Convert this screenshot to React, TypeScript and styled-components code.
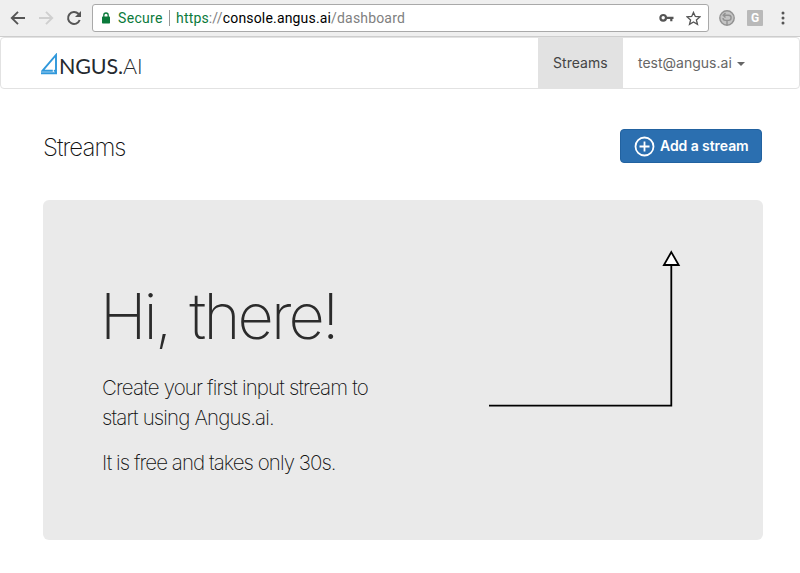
import React from "react";
import styled, { createGlobalStyle } from "styled-components";

const GlobalStyle = createGlobalStyle`
  * { box-sizing: border-box; }
  body { margin: 0; background: #fff; font-family: Inter, "Liberation Sans", sans-serif; overflow: hidden; }
  h1, h2, p { margin: 0; }
  svg { display: block; flex: none; }
`;

const Page = styled.div`
  width: 800px;
  height: 573px;
  display: flex;
  flex-direction: column;
`;

const BrowserBar = styled.header`
  height: 37px;
  flex: none;
  display: flex;
  align-items: center;
  background: #efefef;
  border-bottom: 1px solid #cdcdcd;
  padding-left: 10px;
`;

const NavIcons = styled.div`
  display: flex;
  gap: 12px;
  width: 82px;
`;

const AddressBar = styled.div`
  width: 617px;
  height: 28px;
  display: flex;
  align-items: center;
  background: #fff;
  border: 1px solid #a9a9a9;
  border-radius: 3px;
  padding: 0 7px 0 8px;
  font: 14px/26px Roboto, sans-serif;
  white-space: pre;
`;

const Secure = styled.span`
  width: 51px;
  margin-left: 7px;
  color: #0b7a3b;
  letter-spacing: 0.32px;
`;

const Divider = styled.span`
  width: 1px;
  height: 16px;
  background: #999;
  margin-right: 6px;
`;

const Url = styled.span`
  flex: 1;
  color: #808080;
  letter-spacing: 0.17px;
`;

const UrlPart = styled.span<{ $tone: string }>`
  color: ${(p) => p.$tone};
`;

const AddressActions = styled.div`
  display: flex;
  align-items: center;
  gap: 12px;
`;

const Extensions = styled.div`
  display: flex;
  align-items: center;
  margin-left: 10px;
  gap: 12px;
`;

const ExtensionBadge = styled.span`
  width: 16px;
  height: 16px;
  border-radius: 1px;
  background: #b9b9b9;
  color: #fff;
  font: bold 12px/16px Roboto, sans-serif;
  text-align: center;
`;

const Navbar = styled.nav`
  height: 52px;
  flex: none;
  display: flex;
  border: 1px solid #e2e2e2;
  border-radius: 4px;
  padding-left: 40px;
`;

const Brand = styled.div`
  display: flex;
  flex: 1;
  padding-top: 15px;
`;

const BrandText = styled.span`
  font: 400 21.5px/26px Lato, sans-serif;
  color: #25292e;
  letter-spacing: -0.15px;
  margin-left: 1px;
  white-space: nowrap;
`;

const BrandSuffix = styled.span`
  font-weight: 300;
`;

const NavItem = styled.div<{ $active?: boolean }>`
  display: flex;
  align-items: center;
  width: ${(p) => (p.$active ? 85 : 176)}px;
  padding: 0 0 2px 15px;
  gap: 5px;
  background: ${(p) => (p.$active ? "#e2e2e2" : "transparent")};
  color: ${(p) => (p.$active ? "#444" : "#666")};
  font-size: 14px;
  letter-spacing: ${(p) => (p.$active ? "0.05px" : "0")};
`;

const Caret = styled.svg`
  margin-top: 4px;
`;

const Content = styled.main`
  padding: 40px 37px 0 43px;
`;

const TitleRow = styled.div`
  display: flex;
  justify-content: space-between;
  padding-right: 1px;
  height: 71px;
`;

const Title = styled.h1`
  font: 250 24px/38px Inter, sans-serif;
  letter-spacing: -0.95px;
  color: #111;
`;

const AddButton = styled.button`
  width: 142px;
  height: 34px;
  display: flex;
  align-items: center;
  gap: 5px;
  padding: 0 0 0 13px;
  border: 1px solid #2262a0;
  border-radius: 4px;
  background: #2b6fb0;
  color: #fff;
  font: 600 14px/20px Inter, sans-serif;
  letter-spacing: -0.07px;
  white-space: nowrap;
`;

const Panel = styled.section`
  display: flex;
  height: 340px;
  border-radius: 6px;
  background: #eaeaea;
  padding-left: 59px;
`;

const Intro = styled.div`
  width: 386px;
  padding-top: 81px;
`;

const Greeting = styled.h2`
  font: 200 63px/70px Inter, sans-serif;
  letter-spacing: -2.85px;
  word-spacing: 5px;
  margin: 0 0 22px -2px;
  color: #2b2b2b;
  white-space: nowrap;
`;

const Paragraph = styled.p<{ $tight?: boolean }>`
  width: 290px;
  font: 250 20.5px/30px Inter, sans-serif;
  letter-spacing: ${(p) => (p.$tight ? -0.95 : -0.84)}px;
  color: #111;
  margin-bottom: 15px;
`;

const ArrowArea = styled.div`
  padding-top: 48px;
`;

const ArrowIcon = ({ faded }: { faded?: boolean }) => (
  <svg width="16" height="16" viewBox="0 0 16 16" fill="none" stroke={faded ? "#cfcfcf" : "#555"} strokeWidth="1.9">
    <path d={faded ? "M1 8h13M8 1.9 14.2 8 8 14.1" : "M15 8H2M8 1.9 1.8 8 8 14.1"} />
  </svg>
);

const App = () => (
  <>
    <GlobalStyle />
    <Page>
      <BrowserBar>
        <NavIcons>
          <ArrowIcon />
          <ArrowIcon faded />
          <svg width="16" height="16" viewBox="0 0 16 16">
            <path d="M13.7 10A6 6 0 1 1 12.4 3.8L14 5.4" fill="none" stroke="#555" strokeWidth="2" />
            <path d="M15 1v6H9z" fill="#555" />
          </svg>
        </NavIcons>
        <AddressBar>
          <svg width="10" height="12" viewBox="0 0 10 12">
            <rect x="1" y="4.5" width="8" height="7" rx="0.7" fill="#0b7a3b" />
            <path d="M2.8 5V3.2a2.2 2.2 0 0 1 4.4 0V5" fill="none" stroke="#0b7a3b" strokeWidth="1.3" />
          </svg>
          <Secure>Secure</Secure>
          <Divider />
          <Url>
            <UrlPart $tone="#0b7a3b">https</UrlPart>://<UrlPart $tone="#000">console.angus.ai</UrlPart>/dashboard
          </Url>
          <AddressActions>
            <svg width="15" height="10" viewBox="0 0 15 10" fill="none" stroke="#555">
              <circle cx="4.2" cy="4.8" r="2.8" strokeWidth="2.2" />
              <path d="M7 4.8h7.5M12.3 4.8v3.4" strokeWidth="2.2" />
            </svg>
            <svg width="15" height="15" viewBox="0 0 15 15">
              <path
                d="m7.5 1.4 1.8 4.1 4.6.4-3.5 3 1.1 4.5-4-2.4-4 2.4 1.1-4.5-3.5-3 4.6-.4z"
                fill="none"
                stroke="#555"
                strokeWidth="1.3"
              />
            </svg>
          </AddressActions>
        </AddressBar>
        <Extensions>
          <svg width="16" height="16" viewBox="0 0 16 16" fill="none" stroke="#929292">
            <circle cx="8" cy="8" r="7.2" fill="#c4c4c4" strokeWidth="1.4" />
            <path
              d="M4.2 5.2h5.3a2.6 2.6 0 0 1 0 5.2H6.3A2.5 2.5 0 0 1 4 8M6.5 3 4.2 5.2l2.3 2.2M8 10.4V15"
              strokeWidth="1.4"
            />
          </svg>
          <ExtensionBadge>G</ExtensionBadge>
          <svg width="16" height="16" viewBox="0 0 16 16" fill="#555">
            <circle cx="8" cy="3" r="1.5" />
            <circle cx="8" cy="8" r="1.5" />
            <circle cx="8" cy="13" r="1.5" />
          </svg>
        </Extensions>
      </BrowserBar>
      <Navbar>
        <Brand>
          <svg width="17" height="22" viewBox="0 0 17 22" fill="none" stroke="#3098db" strokeWidth="1.9">
            <path d="M15 20.8V2L1.4 17.8H11.8M0 20.2H16" />
            <path d="M12.8 17.8h2.4" />
          </svg>
          <BrandText>
            NGUS.<BrandSuffix>AI</BrandSuffix>
          </BrandText>
        </Brand>
        <NavItem $active>Streams</NavItem>
        <NavItem>
          test@angus.ai
          <Caret width="8" height="4" viewBox="0 0 8 4">
            <path d="M0 0h8L4 4z" fill="#666" />
          </Caret>
        </NavItem>
      </Navbar>
      <Content>
        <TitleRow>
          <Title>Streams</Title>
          <AddButton>
            <svg width="21" height="21" viewBox="0 0 21 21" fill="none" stroke="#fff" strokeWidth="1.8">
              <circle cx="10.5" cy="10.5" r="9" />
              <path d="M10.5 5.5v10M5.5 10.5h10" />
            </svg>
            Add a stream
          </AddButton>
        </TitleRow>
        <Panel>
          <Intro>
            <Greeting>Hi, there!</Greeting>
            <Paragraph>Create your first input stream to start using Angus.ai.</Paragraph>
            <Paragraph $tight>It is free and takes only 30s.</Paragraph>
          </Intro>
          <ArrowArea>
            <svg width="194" height="162" viewBox="0 0 194 162" stroke="#000" strokeWidth="1.8">
              <path d="M1 157.6H183.3V17" fill="none" />
              <path d="M183.3 4.1 190.7 17H175.9z" fill="#fff" />
            </svg>
          </ArrowArea>
        </Panel>
      </Content>
    </Page>
  </>
);

export default App;
